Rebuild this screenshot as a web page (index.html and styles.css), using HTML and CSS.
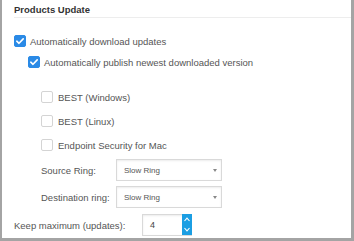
FILE: index.html
```html
<!DOCTYPE html>
<html lang="en">

<head>
    <meta charset="UTF-8">
    <meta name="viewport" content="width=device-width, initial-scale=1.0">
    <title>Products Update</title>
    <link rel="stylesheet" href="styles.css">
</head>

<body>
    <div class="panel">
        <div class="title">Products Update</div>

        <div class="content">
            <label class="check-row">
                <span class="cb checked">
                    <svg width="12" height="12" viewBox="0 0 12 12"><path d="M2.8 6.2 L5 8.3 L9.2 3.9" fill="none" stroke="#fff" stroke-width="1.6" stroke-linecap="round" stroke-linejoin="round"/></svg>
                </span>
                Automatically download updates
            </label>

            <div class="level-1">
                <label class="check-row">
                    <span class="cb checked">
                        <svg width="12" height="12" viewBox="0 0 12 12"><path d="M2.8 6.2 L5 8.3 L9.2 3.9" fill="none" stroke="#fff" stroke-width="1.6" stroke-linecap="round" stroke-linejoin="round"/></svg>
                    </span>
                    Automatically publish newest downloaded version
                </label>

                <div class="level-2">
                    <label class="check-row sub"><span class="cb"></span>BEST (Windows)</label>
                    <label class="check-row sub"><span class="cb"></span>BEST (Linux)</label>
                    <label class="check-row sub"><span class="cb"></span>Endpoint Security for Mac</label>

                    <div class="field-row">
                        <span class="field-label">Source Ring:</span>
                        <div class="select"><span>Slow Ring</span><span class="caret"></span></div>
                    </div>
                    <div class="field-row dest">
                        <span class="field-label">Destination ring:</span>
                        <div class="select"><span>Slow Ring</span><span class="caret"></span></div>
                    </div>
                </div>
            </div>

            <div class="field-row keep">
                <span class="keep-label">Keep maximum (updates):</span>
                <div class="number">
                    <span class="number-value">4</span>
                    <div class="spin">
                        <svg width="10" height="21" viewBox="0 0 10 21">
                            <path d="M2.5 7 L5 4.2 L7.5 7" fill="none" stroke="#fff" stroke-width="1.1"/>
                            <path d="M2.5 14 L5 16.8 L7.5 14" fill="none" stroke="#fff" stroke-width="1.1"/>
                        </svg>
                    </div>
                </div>
            </div>
        </div>
    </div>
</body>

</html>
```

FILE: styles.css
```css
body {
    margin: 0;
    background-color: #fff;
    font-family: "Liberation Sans", Arial, sans-serif;
}

.panel {
    box-sizing: border-box;
    width: 354px;
    height: 241px;
    border-style: solid;
    border-color: #a4a4a4;
    border-width: 0 3px 3px 2px;
    background-color: #fff;
}

.title {
    box-sizing: border-box;
    height: 18px;
    margin-left: 12px;
    padding-top: 4px;
    border-bottom: 1px solid #ededed;
    font-size: 9.5px;
    font-weight: bold;
    line-height: 11px;
    color: #333;
}

.content {
    padding-left: 12px;
    padding-top: 13px;
}

.check-row {
    display: flex;
    align-items: center;
    height: 20px;
    font-size: 9.5px;
    color: #555;
    cursor: pointer;
}

.cb {
    box-sizing: border-box;
    display: flex;
    width: 12px;
    height: 12px;
    margin-right: 4px;
    border: 1px solid #d4d4d4;
    border-radius: 2px;
    background-color: #fff;
}

.cb.checked {
    border-color: #2a8ae6;
    background-color: #2a8ae6;
}

.cb svg {
    margin: -1px;
}

.level-1 {
    margin-left: 14px;
    margin-top: 1px;
}

.level-2 {
    margin-left: 13px;
    margin-top: 15px;
}

.check-row.sub {
    margin-bottom: 4px;
}

.check-row.sub .cb {
    margin-right: 5px;
}

.field-row {
    display: flex;
    align-items: center;
    height: 22px;
    font-size: 9.5px;
    color: #555;
}

.field-row.dest {
    margin-top: 5px;
}

.field-row.keep {
    margin-top: 6px;
}

.field-label {
    width: 75px;
}

.keep-label {
    width: 128px;
}

.select {
    box-sizing: border-box;
    display: flex;
    align-items: center;
    justify-content: space-between;
    width: 106px;
    height: 22px;
    padding: 0 4px 0 7px;
    border: 1px solid #d9d9d9;
    box-shadow: inset 0 1px 2px rgba(0, 0, 0, 0.08);
    font-size: 8px;
    color: #555;
}

.caret {
    width: 0;
    height: 0;
    border-left: 2.5px solid transparent;
    border-right: 2.5px solid transparent;
    border-top: 3px solid #888;
}

.number {
    box-sizing: border-box;
    display: flex;
    align-items: center;
    justify-content: space-between;
    width: 50px;
    height: 22px;
    border: 1px solid #d9d9d9;
    border-right: none;
    box-shadow: inset 0 1px 2px rgba(0, 0, 0, 0.08);
}

.number-value {
    padding-left: 7px;
    font-size: 9px;
    color: #444;
}

.spin {
    display: flex;
    width: 10px;
    height: 21px;
    margin-top: -1px;
    background-color: #1b9ee3;
}
```
